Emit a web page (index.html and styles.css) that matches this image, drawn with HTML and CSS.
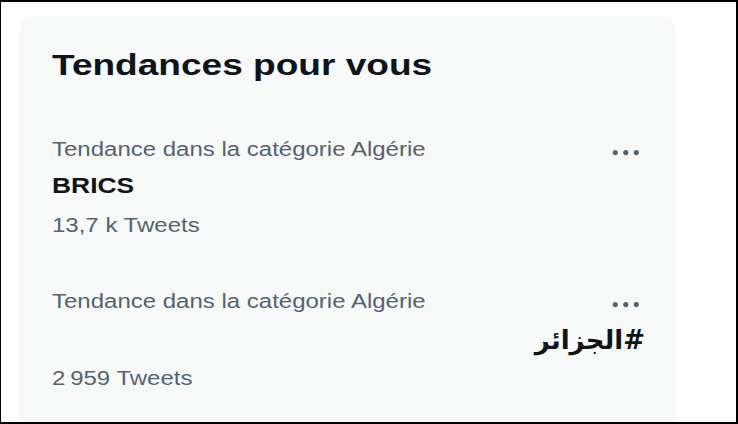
FILE: index.html
```html
<!DOCTYPE html>
<html lang="fr">
<head>
<meta charset="utf-8">
<title>Tendances pour vous</title>
<link rel="stylesheet" href="styles.css">
</head>
<body>
<div class="frame">
  <section class="card">
    <h2 class="title"><span class="sx sx-title">Tendances pour vous</span></h2>
    <div class="list">
      <div class="trend">
        <div class="meta">
          <span class="sx">Tendance dans la catégorie Algérie</span>
          <svg class="more" width="36" height="24" viewBox="0 0 36 24" aria-label="Plus"><circle cx="7.3" cy="15.6" r="2.6"/><circle cx="17.8" cy="15.6" r="2.6"/><circle cx="28.3" cy="15.6" r="2.6"/></svg>
        </div>
        <div class="name"><span class="sx">BRICS</span></div>
        <div class="count"><span class="sx">13,7 k Tweets</span></div>
      </div>
      <div class="trend">
        <div class="meta">
          <span class="sx">Tendance dans la catégorie Algérie</span>
          <svg class="more" width="36" height="24" viewBox="0 0 36 24" aria-label="Plus"><circle cx="7.3" cy="15.6" r="2.6"/><circle cx="17.8" cy="15.6" r="2.6"/><circle cx="28.3" cy="15.6" r="2.6"/></svg>
        </div>
        <div class="name name-ar" dir="rtl">#الجزائر</div>
        <div class="count count-ar"><span class="sx">2&#8239;959 Tweets</span></div>
      </div>
    </div>
  </section>
</div>
</body>
</html>
```

FILE: styles.css
```css
html, body {
  margin: 0;
  padding: 0;
  background: #ffffff;
}

.frame {
  box-sizing: border-box;
  width: 738px;
  height: 424px;
  border-style: solid;
  border-color: #000000;
  border-width: 2px 2px 2px 1px;
  padding: 14px 0 0 18px;
  display: flex;
  overflow: hidden;
  font-family: "Liberation Sans", Arial, sans-serif;
}

.card {
  box-sizing: border-box;
  width: 657px;
  background: #f7f9f9;
  border-radius: 16px 16px 0 0;
  padding: 31px 32px 0 33px;
  color: #0f1419;
}

.sx {
  display: inline-block;
  transform: scaleX(1.2);
  transform-origin: left center;
  white-space: nowrap;
}

.title {
  margin: 0;
  font-size: 30px;
  line-height: 36px;
  font-weight: 700;
}

.sx-title {
  transform: scaleX(1.235);
}

.list {
  margin-top: 54px;
  display: flex;
  flex-direction: column;
  gap: 52px;
}

.trend {
  display: flex;
  flex-direction: column;
}

.meta {
  display: flex;
  justify-content: space-between;
  align-items: flex-start;
  font-size: 20px;
  line-height: 24px;
  color: #536471;
}

.more {
  fill: #536471;
  flex: none;
}

.name {
  margin-top: 12px;
  font-size: 22px;
  line-height: 26px;
  font-weight: 700;
}

.name-ar {
  margin-top: 13px;
  margin-right: -1px;
  text-align: right;
  font-family: "DejaVu Sans", sans-serif;
  font-size: 26px;
  line-height: 28px;
}

.count {
  margin-top: 14px;
  font-size: 20px;
  line-height: 24px;
  color: #536471;
}

.count-ar {
  margin-top: 12px;
}
```
